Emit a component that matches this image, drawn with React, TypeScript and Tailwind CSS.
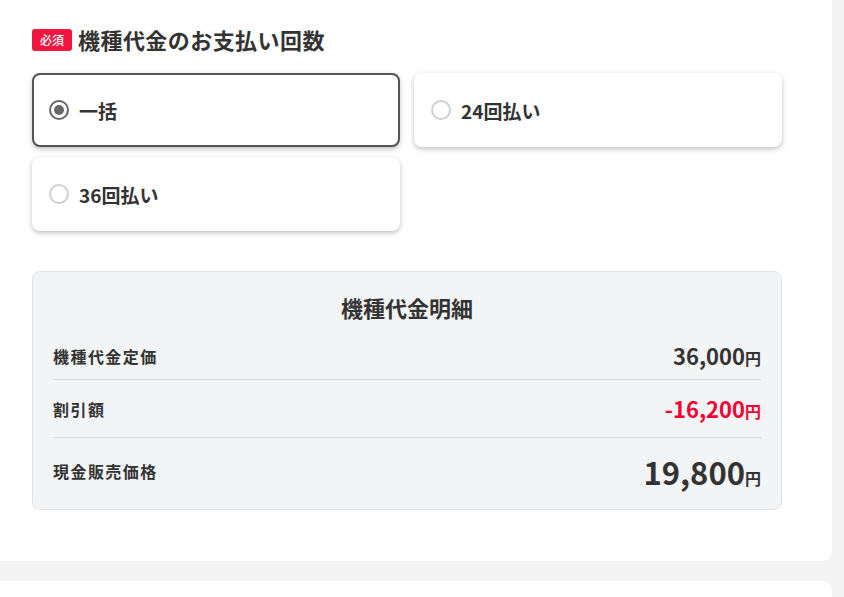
import React from "react";

const font = { fontFamily: '"Noto Sans CJK JP", "Noto Sans", sans-serif' };

function Radio({ checked }: { checked: boolean }) {
  return checked ? (
    <span className="flex h-[20px] w-[20px] shrink-0 items-center justify-center rounded-full border-2 border-[#666]">
      <span className="h-[10px] w-[10px] rounded-full bg-[#666]" />
    </span>
  ) : (
    <span className="h-[20px] w-[20px] shrink-0 rounded-full border-2 border-[#d0d0d0]" />
  );
}

function Option({ label, checked }: { label: string; checked?: boolean }) {
  return (
    <div
      className={
        "flex h-[74px] items-center gap-[10px] rounded-[8px] border-2 bg-white pl-[15px] shadow-[0_2px_5px_rgba(0,0,0,0.25)] " +
        (checked ? "border-[#555]" : "border-transparent")
      }
    >
      <Radio checked={!!checked} />
      <span className="text-[19px] font-bold leading-none text-[#333]">{label}</span>
    </div>
  );
}

function Yen() {
  return <span className="text-[16px] font-bold">円</span>;
}

export default function App() {
  return (
    <div className="min-h-[597px] w-[844px] overflow-hidden bg-[#f4f4f4]" style={font}>
      <div className="w-[832px] rounded-br-[10px] bg-white pb-[51px] pl-[32px] pt-[27px]">
        <div className="flex h-[26px] items-center gap-[6px]">
          <span className="flex h-[22px] w-[40px] items-center justify-center rounded-[3px] bg-[#f2163e] text-[12px] font-medium leading-none text-white">
            必須
          </span>
          <span className="pb-[3px] text-[22px] font-bold leading-none tracking-[0.02em] text-[#333]">機種代金のお支払い回数</span>
        </div>

        <div className="mt-[20px] grid w-[750px] grid-cols-2 gap-x-[14px] gap-y-[10px]">
          <Option label="一括" checked />
          <Option label="24回払い" />
          <Option label="36回払い" />
        </div>

        <div className="mt-[40px] h-[239px] w-[750px] rounded-[8px] border border-[#e3e3e3] bg-[#f3f4f6] px-[20px] pt-[19px] text-[#333]">
          <div className="h-[32px] text-center text-[22px] font-bold leading-[32px]">機種代金明細</div>
          <div className="flex h-[57px] items-center justify-between border-b border-[#d9d9d9] pt-[9px]">
            <span className="text-[16px] font-bold tracking-[0.09em]">機種代金定価</span>
            <span className="text-[22px] font-bold">
              36,000<Yen />
            </span>
          </div>
          <div className="flex h-[58px] items-center justify-between border-b border-[#d9d9d9]">
            <span className="text-[16px] font-bold tracking-[0.09em]">割引額</span>
            <span className="text-[22px] font-bold text-[#f5002f]">
              -16,200<Yen />
            </span>
          </div>
          <div className="flex h-[68px] items-center justify-between pb-[2px]">
            <span className="text-[16px] font-bold tracking-[0.09em]">現金販売価格</span>
            <span className="text-[31px] font-bold leading-none">
              19,800<Yen />
            </span>
          </div>
        </div>
      </div>
      <div className="mt-[20px] h-[40px] w-[832px] rounded-tr-[10px] bg-white" />
    </div>
  );
}
